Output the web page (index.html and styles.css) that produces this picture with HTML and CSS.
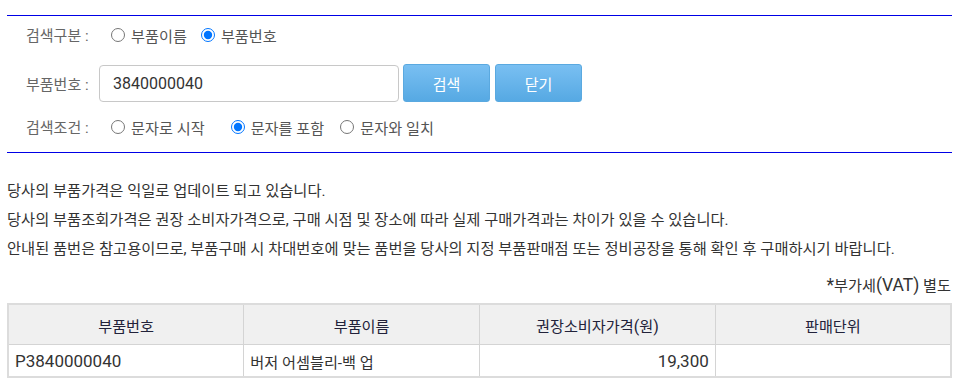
FILE: index.html
```html
<!DOCTYPE html>
<html lang="ko">
<head>
<meta charset="utf-8">
<link rel="stylesheet" href="styles.css">
</head>
<body>
<div class="page">
  <div class="search">
    <div class="row row-radio">
      <span class="label">검색구분 :</span>
      <div class="opts">
        <label class="opt"><input type="radio" name="kind"><span>부품이름</span></label>
        <label class="opt"><input type="radio" name="kind" checked><span>부품번호</span></label>
      </div>
    </div>
    <div class="row row-input">
      <span class="label">부품번호 :</span>
      <input class="field" type="text" value="3840000040">
      <button class="btn">검색</button>
      <button class="btn">닫기</button>
    </div>
    <div class="row row-radio">
      <span class="label">검색조건 :</span>
      <div class="opts">
        <label class="opt opt-a"><input type="radio" name="cond"><span>문자로 시작</span></label>
        <label class="opt opt-b"><input type="radio" name="cond" checked><span>문자를 포함</span></label>
        <label class="opt"><input type="radio" name="cond"><span>문자와 일치</span></label>
      </div>
    </div>
  </div>

  <div class="notice">
    <p>당사의 부품가격은 익일로 업데이트 되고 있습니다.</p>
    <p>당사의 부품조회가격은 권장 소비자가격으로, 구매 시점 및 장소에 따라 실제 구매가격과는 차이가 있을 수 있습니다.</p>
    <p>안내된 품번은 참고용이므로, 부품구매 시 차대번호에 맞는 품번을 당사의 지정 부품판매점 또는 정비공장을 통해 확인 후 구매하시기 바랍니다.</p>
  </div>
  <div class="vat"><span class="lat">*</span>부가세<span class="lat">(VAT)</span> 별도</div>

  <table class="result">
    <thead>
      <tr><th>부품번호</th><th>부품이름</th><th>권장소비자가격<span class="lat-s">(</span>원<span class="lat-s">)</span></th><th>판매단위</th></tr>
    </thead>
    <tbody>
      <tr><td class="code">P3840000040</td><td>버저 어셈블리-백 업</td><td class="code num">19,300</td><td></td></tr>
    </tbody>
  </table>
</div>
</body>
</html>
```

FILE: styles.css
```css
html, body {
  margin: 0;
  padding: 0;
  background: #fff;
}
body {
  font-family: Roboto, "Noto Sans CJK KR", "Noto Sans", sans-serif;
  font-size: 15.2px;
  color: #333;
}
.page {
  padding: 15px 6px 0 7px;
}
.search {
  border-top: 1px solid #0000e6;
  border-bottom: 1px solid #0000e6;
  padding: 5px 0 12px 0;
  display: flex;
  flex-direction: column;
}
.row {
  display: flex;
  align-items: center;
}
.row-radio {
  height: 27px;
}
.row-input {
  margin: 16px 0 11px 0;
}
.label {
  width: 73px;
  padding-left: 19px;
  color: #666;
  font-size: 15px;
}
.opts {
  display: flex;
  align-items: center;
  padding-left: 12px;
}
.opt {
  display: flex;
  align-items: center;
  color: #555;
  margin-right: 14px;
}
.opt-a {
  margin-right: 26px;
}
.opt-b {
  margin-right: 16px;
}
.opt input {
  margin: 0 6px 0 0;
  width: 14px;
  height: 14px;
}
.field {
  width: 300px;
  height: 37px;
  box-sizing: border-box;
  border: 1px solid #c8c8c8;
  border-radius: 4px;
  padding: 0 13px;
  font-family: Roboto, "Noto Sans CJK KR", sans-serif;
  font-size: 16px;
  color: #333;
}
.btn {
  width: 87px;
  height: 38px;
  margin-left: 4px;
  border: 1px solid #5aa9e0;
  border-radius: 3px;
  background: linear-gradient(#79bff2, #56a9e3);
  color: #fff;
  font-family: Roboto, "Noto Sans CJK KR", sans-serif;
  font-size: 15px;
}
.btn + .btn {
  margin-left: 5px;
}
.notice {
  margin-top: 24px;
}
.notice p {
  margin: 0;
  line-height: 29px;
  font-size: 15.3px;
}
.vat {
  text-align: right;
  line-height: 28px;
  margin-top: 7px;
  padding-right: 1px;
}
.lat {
  font-size: 17.5px;
}
.lat-s {
  font-size: 16px;
}
.result {
  margin-top: 3px;
  width: 945px;
  border-collapse: collapse;
  table-layout: fixed;
  border: 2px solid #dcdcdc;
}
.result th, .result td {
  border: 1px solid #d4d4d4;
  font-weight: normal;
}
.result th {
  background: #f0f0f0;
  color: #22223a;
  height: 37px;
  text-align: center;
}
.result td {
  height: 31px;
  padding: 0 6px;
  color: #333;
}
.result td.code {
  font-size: 17px;
}
.result td.num {
  text-align: right;
}
```
